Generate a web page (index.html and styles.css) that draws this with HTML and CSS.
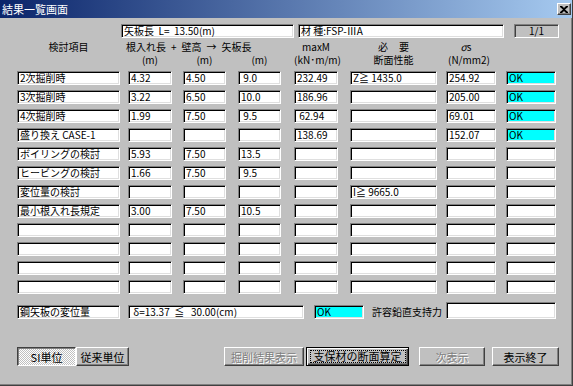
FILE: index.html
```html
<!DOCTYPE html>
<html lang="ja">
<head>
    <meta charset="UTF-8">
    <title>結果一覧画面</title>
    <link rel="stylesheet" href="styles.css">
</head>
<body>
<div class="window">
    <div class="titlebar">
        <span class="title">結果一覧画面</span>
        <span class="closeBtn">
            <svg width="8" height="7" viewBox="0 0 8 7"><path d="M0 0h2l2 2 2-2h2v1L5 3.5 8 6v1H6L4 5 2 7H0V6l3-2.5L0 1z" fill="#000"/></svg>
        </span>
    </div>
    <div class="content">
        <div class="topRow">
            <div class="field len">矢板長&nbsp; L=&nbsp; 13.50(m)</div>
            <div class="field mat">材 種:FSP-ⅢA</div>
            <div class="field page">1/1</div>
        </div>

        <div class="heads">
            <div class="h h1">検討項目</div>
            <div class="h h2"><span>根入れ長</span><span>+</span><span>壁高</span><span>→</span><span>矢板長</span></div>
            <div class="h h5">maxM</div>
            <div class="h h6">必&nbsp;&nbsp;&nbsp;&nbsp; 要</div>
            <div class="h h7"><i>σ</i>s</div>
            <div class="h u2">(m)</div>
            <div class="h u3">(m)</div>
            <div class="h u4">(m)</div>
            <div class="h u5">(kN･m/m)</div>
            <div class="h u6">断面性能</div>
            <div class="h u7">(N/mm2)</div>
        </div>

        <div class="grid">
            <div class="field">2次掘削時</div><div class="field">4.32</div><div class="field">4.50</div><div class="field">&nbsp;9.0</div>
            <div class="field">232.49</div><div class="field">Z≧ 1435.0</div><div class="field">254.92</div><div class="field ok">OK</div>

            <div class="field">3次掘削時</div><div class="field">3.22</div><div class="field">6.50</div><div class="field">10.0</div>
            <div class="field">186.96</div><div class="field"></div><div class="field">205.00</div><div class="field ok">OK</div>

            <div class="field">4次掘削時</div><div class="field">1.99</div><div class="field">7.50</div><div class="field">&nbsp;9.5</div>
            <div class="field">&nbsp;62.94</div><div class="field"></div><div class="field">69.01</div><div class="field ok">OK</div>

            <div class="field">盛り換え CASE-1</div><div class="field"></div><div class="field"></div><div class="field"></div>
            <div class="field">138.69</div><div class="field"></div><div class="field">152.07</div><div class="field ok">OK</div>

            <div class="field">ボイリングの検討</div><div class="field">5.93</div><div class="field">7.50</div><div class="field">13.5</div>
            <div class="field"></div><div class="field"></div><div class="field"></div><div class="field"></div>

            <div class="field">ヒービングの検討</div><div class="field">1.66</div><div class="field">7.50</div><div class="field">&nbsp;9.5</div>
            <div class="field"></div><div class="field"></div><div class="field"></div><div class="field"></div>

            <div class="field">変位量の検討</div><div class="field"></div><div class="field"></div><div class="field"></div>
            <div class="field"></div><div class="field">I≧ 9665.0</div><div class="field"></div><div class="field"></div>

            <div class="field">最小根入れ長規定</div><div class="field">3.00</div><div class="field">7.50</div><div class="field">10.5</div>
            <div class="field"></div><div class="field"></div><div class="field"></div><div class="field"></div>

            <div class="field"></div><div class="field"></div><div class="field"></div><div class="field"></div>
            <div class="field"></div><div class="field"></div><div class="field"></div><div class="field"></div>

            <div class="field"></div><div class="field"></div><div class="field"></div><div class="field"></div>
            <div class="field"></div><div class="field"></div><div class="field"></div><div class="field"></div>

            <div class="field"></div><div class="field"></div><div class="field"></div><div class="field"></div>
            <div class="field"></div><div class="field"></div><div class="field"></div><div class="field"></div>

            <div class="field"></div><div class="field"></div><div class="field"></div><div class="field"></div>
            <div class="field"></div><div class="field"></div><div class="field"></div><div class="field"></div>
        </div>

        <div class="dispRow">
            <div class="field dispName">鋼矢板の変位量</div>
            <div class="field dispVal">&nbsp;δ=13.37&nbsp; ≦&nbsp;&nbsp; 30.00(cm)</div>
            <div class="field ok dispOk">OK</div>
            <div class="dispLabel">許容鉛直支持力</div>
            <div class="field dispBear"></div>
        </div>

        <div class="buttons">
            <div class="btn pressed btnSi">SI単位</div>
            <div class="btn btnOld">従来単位</div>
            <div class="btn disabled btnDig">掘削結果表示</div>
            <div class="btn focused btnSup"><span class="focusRect">支保材の断面算定</span></div>
            <div class="btn disabled btnNext">次表示</div>
            <div class="btn btnEnd">表示終了</div>
        </div>
    </div>
</div>
</body>
</html>
```

FILE: styles.css
```css
body {
    margin: 0;
    background: #c0c0c0;
    font-family: "Noto Sans CJK JP", "DejaVu Sans", sans-serif;
    font-size: 10px;
    color: #000;
}
.window {
    width: 573px;
    height: 386px;
    box-sizing: border-box;
    background: #c0c0c0;
    border-right: 1px solid #404040;
    border-bottom: 1px solid #404040;
    box-shadow: inset -1px -1px #808080;
    overflow: hidden;
}
.titlebar {
    height: 18px;
    display: flex;
    align-items: center;
    justify-content: space-between;
    background: linear-gradient(to right, #0a246a, #a6caf0);
    padding: 0 1px 0 2px;
}
.title {
    color: #fff;
    font-size: 11px;
    line-height: 18px;
}
.closeBtn {
    width: 14px;
    height: 12px;
    box-sizing: border-box;
    background: #c0c0c0;
    border: 1px solid;
    border-color: #fff #404040 #404040 #fff;
    box-shadow: inset -1px -1px #808080;
    display: flex;
    align-items: center;
    justify-content: center;
}
.content {
    padding-left: 17px;
}
.field {
    height: 14px;
    box-sizing: border-box;
    background: #fff;
    border: 1px solid;
    border-color: #808080 #fff #fff #808080;
    box-shadow: inset 1px 1px #000, inset -1px -1px #dfdfdf;
    padding: 0 2px;
    line-height: 12px;
    white-space: nowrap;
    overflow: hidden;
}
.ok {
    background: #00ffff;
}
.topRow {
    display: flex;
    margin-top: 6px;
}
.len {
    margin-left: 104px;
    width: 173px;
}
.mat {
    margin-left: 4px;
    width: 206px;
}
.page {
    margin-left: 10px;
    width: 45px;
    background: #c0c0c0;
    text-align: center;
    box-shadow: inset 1px 1px #404040;
}
.heads {
    display: grid;
    grid-template-columns: 111px 55px 55px 56px 56px 96px 60px 50px;
    grid-template-rows: 13px 13px;
    padding-top: 2px;
    margin-bottom: 5px;
    line-height: 11px;
    white-space: nowrap;
}
.h { align-self: center; }
.h1 { grid-column: 1; grid-row: 1; width: 103px; text-align: center; }
.h2 {
    grid-column: 2 / 5;
    grid-row: 1;
    margin-left: -2px;
    display: flex;
    gap: 5px;
}
.h5 { grid-column: 5; grid-row: 1; width: 44px; text-align: center; }
.h6 { grid-column: 6; grid-row: 1; width: 87px; text-align: center; }
.h7 { grid-column: 7; grid-row: 1; width: 40px; text-align: center; }
.u2 { grid-column: 2; grid-row: 2; width: 44px; text-align: center; }
.u3 { grid-column: 3; grid-row: 2; width: 43px; text-align: center; }
.u4 { grid-column: 4; grid-row: 2; width: 43px; text-align: center; }
.u5 { grid-column: 5; grid-row: 2; width: 44px; text-align: center; }
.u6 { grid-column: 6; grid-row: 2; width: 87px; text-align: center; }
.u7 { grid-column: 7; grid-row: 2; width: 46px; text-align: center; }
.grid {
    display: grid;
    grid-template-columns: 111px 55px 55px 56px 56px 96px 60px 50px;
    grid-auto-rows: 14px;
    row-gap: 5px;
}
.grid .field:nth-child(8n+1) { width: 103px; }
.grid .field:nth-child(8n+2) { width: 44px; }
.grid .field:nth-child(8n+3) { width: 43px; }
.grid .field:nth-child(8n+4) { width: 43px; }
.grid .field:nth-child(8n+5) { width: 44px; }
.grid .field:nth-child(8n+6) { width: 87px; }
.grid .field:nth-child(8n+7) { width: 50px; }
.grid .field:nth-child(8n+8) { width: 50px; }
.dispRow {
    display: flex;
    align-items: center;
    margin-top: 9px;
    height: 17px;
}
.dispName { width: 103px; }
.dispVal { width: 176px; margin-left: 8px; }
.dispOk {
    width: 50px;
    margin-left: 10px;
}
.dispLabel {
    margin-left: 8px;
    width: 74px;
    line-height: 12px;
}
.dispBear {
    width: 110px;
    height: 17px;
    margin-bottom: 3px;
}
.buttons {
    display: flex;
    margin-top: 27px;
}
.btn {
    height: 19px;
    box-sizing: border-box;
    border: 1px solid;
    border-color: #fff #404040 #404040 #fff;
    box-shadow: inset -1px -1px #808080;
    display: flex;
    align-items: center;
    justify-content: center;
    line-height: 12px;
    font-size: 11px;
    white-space: nowrap;
}
.pressed {
    border-color: #404040 #fff #fff #404040;
    box-shadow: inset 1px 1px #808080;
    background: repeating-conic-gradient(#fff 0 25%, #c0c0c0 0 50%) 0 0 / 2px 2px;
    padding-top: 1px;
}
.disabled {
    color: #808080;
    text-shadow: 1px 1px #fff;
}
.focused {
    border-color: #000;
    box-shadow: inset 1px 1px #fff, inset -1px -1px #404040, inset -2px -2px #808080;
}
.focusRect {
    border: 1px dotted #000;
    padding: 0 3px;
    line-height: 11px;
}
.btnSi { width: 59px; }
.btnOld { width: 53px; }
.btnDig { width: 80px; margin-left: 95px; }
.btnSup { width: 103px; margin-left: 2px; }
.btnNext { width: 66px; margin-left: 10px; }
.btnEnd { width: 67px; margin-left: 7px; }
```
